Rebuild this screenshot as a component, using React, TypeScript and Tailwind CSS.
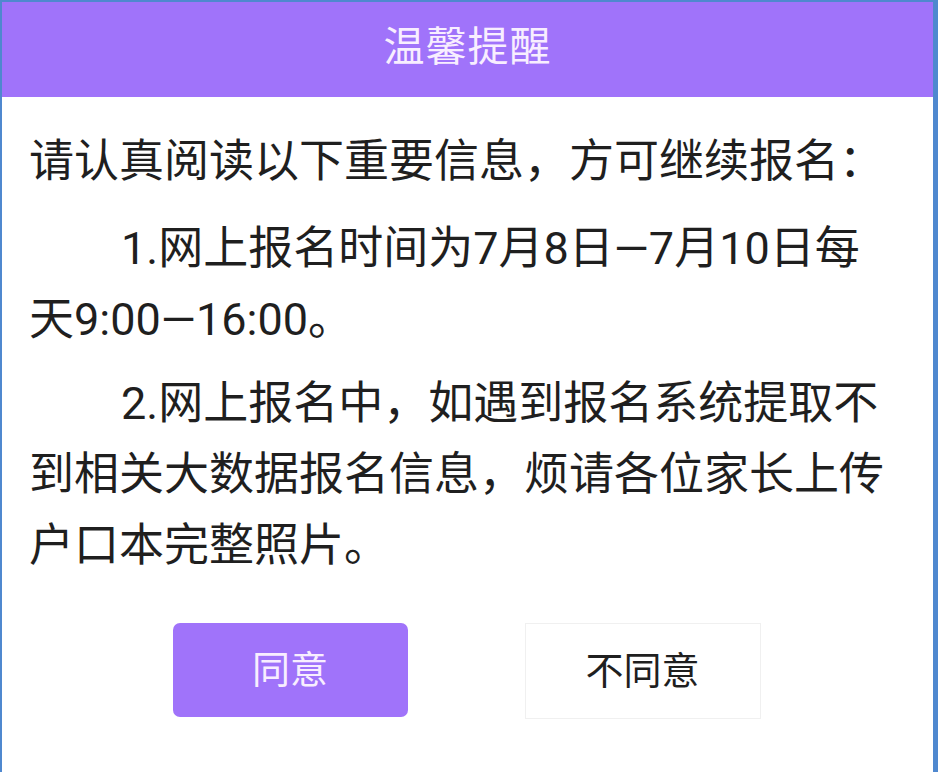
export default function App() {
  return (
    <div className="w-[938px] h-[772px] bg-[#4f88cf] pl-[2px] pt-[2px] pr-[5px] overflow-hidden">
      <div
        className="h-full bg-white flex flex-col"
        style={{ fontFamily: 'Roboto, "Noto Sans CJK SC", "Noto Sans", sans-serif' }}
      >
        {/* Header */}
        <div className="h-[95px] shrink-0 bg-[#a073fa] flex items-center justify-center">
          <h1 className="text-[41px] text-[#f8eeff] tracking-[1px] leading-none -mt-[4px]">温馨提醒</h1>
        </div>

        {/* Notice body */}
        <div className="pl-[27px] pt-[29px] w-[897px] shrink-0 text-[45px] leading-[71px] text-[#1f1f1f]">
          <p>请认真阅读以下重要信息，方可继续报名：</p>
          <p className="mt-[16px] indent-[92px]">1.网上报名时间为7月8日—7月10日每天9:00—16:00。</p>
          <p className="mt-[13px] indent-[92px]">
            2.网上报名中，如遇到报名系统提取不到相关大数据报名信息，烦请各位家长上传户口本完整照片。
          </p>
        </div>

        {/* Actions */}
        <div className="mt-[42px] shrink-0 flex justify-center gap-[117px] pr-[2px]">
          <button className="w-[235px] h-[94px] rounded-[7px] bg-[#a073fa] text-[#f8eeff] text-[38px]">
            同意
          </button>
          <button className="w-[236px] h-[96px] bg-white border border-[#f0f0f0] text-[#1f1f1f] text-[38px]">
            不同意
          </button>
        </div>
      </div>
    </div>
  )
}
